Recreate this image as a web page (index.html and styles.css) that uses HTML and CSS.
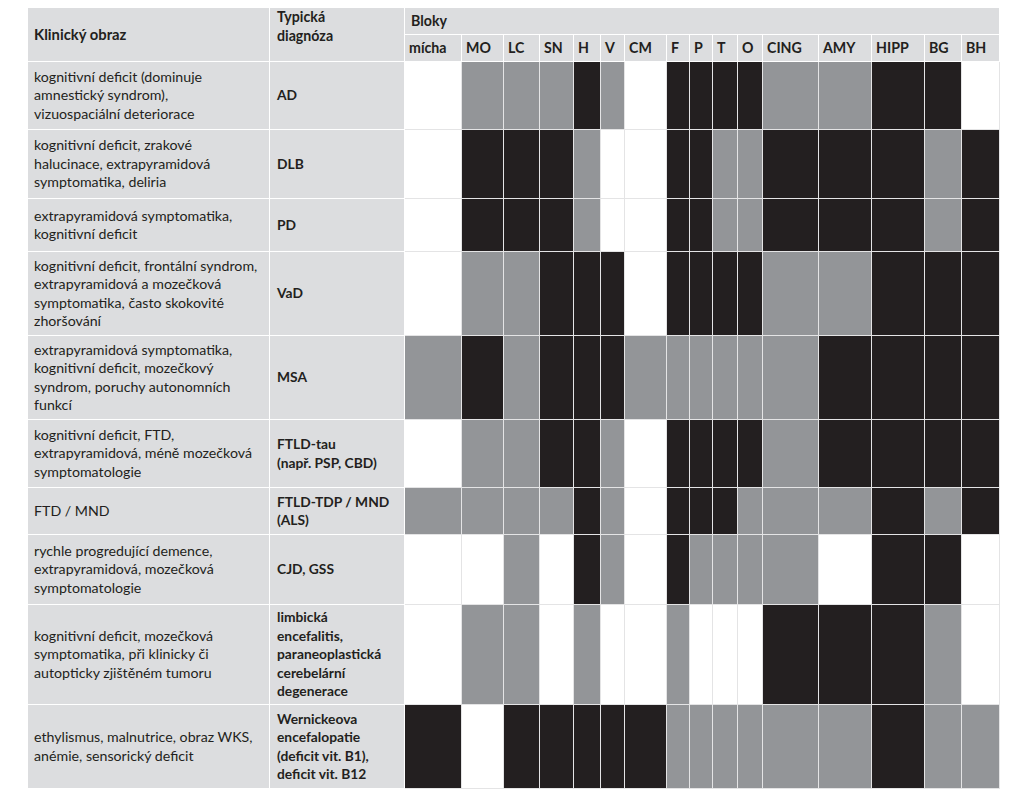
FILE: index.html
```html
<!DOCTYPE html>
<html lang="cs">
<head>
  <meta charset="UTF-8">
  <title>Bloky – klinický obraz a typická diagnóza</title>
  <link rel="stylesheet" href="styles.css">
</head>
<body>

  <div class="page">
    <table class="blocks">
      <colgroup>
        <col class="c-klin">
        <col class="c-diag">
        <col class="c57"><col class="c42"><col class="c36"><col class="c34">
        <col class="c27"><col class="c24"><col class="c42"><col class="c23">
        <col class="c23"><col class="c25"><col class="c25"><col class="c56">
        <col class="c53"><col class="c53"><col class="c37"><col class="c38">
      </colgroup>
      <thead>
        <tr class="hrow">
          <th rowspan="2" class="th-klin">Klinický obraz</th>
          <th rowspan="2" class="th-diag">Typická<br>diagnóza</th>
          <th colspan="16" class="th-bloky">Bloky</th>
        </tr>
        <tr class="hrow">
          <th>mícha</th><th>MO</th><th>LC</th><th>SN</th><th>H</th><th>V</th><th>CM</th><th>F</th>
          <th>P</th><th>T</th><th>O</th><th>CING</th><th>AMY</th><th>HIPP</th><th>BG</th><th>BH</th>
        </tr>
      </thead>
      <tbody>
        <!-- w = bílá, g = šedá, b = černá -->
        <tr class="r68">
          <td class="klin">kognitivní deficit (dominuje<br>amnestický syndrom),<br>vizuospaciální deteriorace</td>
          <td class="diag">AD</td>
          <td class="w"></td><td class="g"></td><td class="g"></td><td class="g"></td><td class="b"></td><td class="g"></td><td class="w"></td><td class="b"></td>
          <td class="b"></td><td class="b"></td><td class="b"></td><td class="g"></td><td class="g"></td><td class="b"></td><td class="b"></td><td class="w"></td>
        </tr>
        <tr class="r69">
          <td class="klin">kognitivní deficit, zrakové<br>halucinace, extrapyramidová<br>symptomatika, deliria</td>
          <td class="diag">DLB</td>
          <td class="w"></td><td class="b"></td><td class="b"></td><td class="b"></td><td class="g"></td><td class="w"></td><td class="w"></td><td class="b"></td>
          <td class="b"></td><td class="g"></td><td class="g"></td><td class="b"></td><td class="b"></td><td class="b"></td><td class="g"></td><td class="b"></td>
        </tr>
        <tr class="r53">
          <td class="klin">extrapyramidová symptomatika,<br>kognitivní deficit</td>
          <td class="diag">PD</td>
          <td class="w"></td><td class="b"></td><td class="b"></td><td class="b"></td><td class="g"></td><td class="w"></td><td class="w"></td><td class="b"></td>
          <td class="b"></td><td class="g"></td><td class="g"></td><td class="b"></td><td class="b"></td><td class="b"></td><td class="g"></td><td class="b"></td>
        </tr>
        <tr class="r84">
          <td class="klin">kognitivní deficit, frontální syndrom,<br>extrapyramidová a mozečková<br>symptomatika, často skokovité<br>zhoršování</td>
          <td class="diag">VaD</td>
          <td class="w"></td><td class="g"></td><td class="g"></td><td class="b"></td><td class="b"></td><td class="b"></td><td class="w"></td><td class="b"></td>
          <td class="b"></td><td class="b"></td><td class="b"></td><td class="g"></td><td class="g"></td><td class="b"></td><td class="b"></td><td class="b"></td>
        </tr>
        <tr class="r84">
          <td class="klin">extrapyramidová symptomatika,<br>kognitivní deficit, mozečkový<br>syndrom, poruchy autonomních<br>funkcí</td>
          <td class="diag">MSA</td>
          <td class="g"></td><td class="b"></td><td class="g"></td><td class="b"></td><td class="b"></td><td class="b"></td><td class="g"></td><td class="g"></td>
          <td class="g"></td><td class="g"></td><td class="g"></td><td class="g"></td><td class="b"></td><td class="b"></td><td class="b"></td><td class="b"></td>
        </tr>
        <tr class="r68">
          <td class="klin">kognitivní deficit, FTD,<br>extrapyramidová, méně mozečková<br>symptomatologie</td>
          <td class="diag">FTLD-tau<br>(např. PSP, CBD)</td>
          <td class="w"></td><td class="g"></td><td class="g"></td><td class="b"></td><td class="b"></td><td class="g"></td><td class="w"></td><td class="b"></td>
          <td class="b"></td><td class="b"></td><td class="b"></td><td class="g"></td><td class="b"></td><td class="b"></td><td class="b"></td><td class="b"></td>
        </tr>
        <tr class="r47">
          <td class="klin">FTD / MND</td>
          <td class="diag">FTLD-TDP / MND<br>(ALS)</td>
          <td class="g"></td><td class="g"></td><td class="g"></td><td class="g"></td><td class="b"></td><td class="g"></td><td class="w"></td><td class="b"></td>
          <td class="b"></td><td class="b"></td><td class="g"></td><td class="g"></td><td class="g"></td><td class="b"></td><td class="g"></td><td class="b"></td>
        </tr>
        <tr class="r70">
          <td class="klin">rychle progredující demence,<br>extrapyramidová, mozečková<br>symptomatologie</td>
          <td class="diag">CJD, GSS</td>
          <td class="w"></td><td class="w"></td><td class="g"></td><td class="w"></td><td class="b"></td><td class="g"></td><td class="w"></td><td class="b"></td>
          <td class="g"></td><td class="g"></td><td class="g"></td><td class="g"></td><td class="w"></td><td class="b"></td><td class="b"></td><td class="w"></td>
        </tr>
        <tr class="r100">
          <td class="klin">kognitivní deficit, mozečková<br>symptomatika, při klinicky či<br>autopticky zjištěném tumoru</td>
          <td class="diag">limbická<br>encefalitis,<br>paraneoplastická<br>cerebelární<br>degenerace</td>
          <td class="w"></td><td class="g"></td><td class="g"></td><td class="w"></td><td class="g"></td><td class="w"></td><td class="w"></td><td class="g"></td>
          <td class="w"></td><td class="w"></td><td class="w"></td><td class="b"></td><td class="b"></td><td class="b"></td><td class="g"></td><td class="w"></td>
        </tr>
        <tr class="r84">
          <td class="klin">ethylismus, malnutrice, obraz WKS,<br>anémie, sensorický deficit</td>
          <td class="diag">Wernickeova<br>encefalopatie<br>(deficit vit. B1),<br>deficit vit. B12</td>
          <td class="b"></td><td class="w"></td><td class="b"></td><td class="b"></td><td class="b"></td><td class="b"></td><td class="b"></td><td class="g"></td>
          <td class="g"></td><td class="g"></td><td class="g"></td><td class="g"></td><td class="g"></td><td class="b"></td><td class="g"></td><td class="g"></td>
        </tr>
      </tbody>
    </table>
  </div>

</body>
</html>
```

FILE: styles.css
```css
body {
  margin: 0;
  padding: 0;
  background-color: #ffffff;
  font-family: Lato, "Liberation Sans", sans-serif;
  color: #231f20;
}

.page {
  padding: 7px 0 0 27px;
}

.blocks {
  width: 973px;
  table-layout: fixed;
  border-collapse: collapse;
  font-size: 14.2px;
  line-height: 18.5px;
}

.c-klin { width: 242px; }
.c-diag { width: 135px; }
.c57 { width: 57px; }
.c56 { width: 56px; }
.c53 { width: 53px; }
.c42 { width: 42px; }
.c38 { width: 38px; }
.c37 { width: 37px; }
.c36 { width: 36px; }
.c34 { width: 34px; }
.c27 { width: 27px; }
.c25 { width: 25px; }
.c24 { width: 24px; }
.c23 { width: 23px; }

th, td {
  border: 1px solid #e4e4e5;
  padding: 0;
}

th {
  background-color: #dcdddf;
  font-weight: bold;
  text-align: left;
  padding: 0 4px;
  white-space: nowrap;
}

thead th {
  border-color: #ffffff;
}

.hrow {
  height: 27px;
}

.th-klin {
  padding-left: 6px;
  font-size: 14.8px;
}

.th-diag {
  padding: 0 7px;
  vertical-align: top;
}

.th-bloky {
  padding-left: 6px;
}

.klin, .diag {
  background-color: #dcdddf;
  border-color: #ffffff;
  padding: 0 6px;
  vertical-align: middle;
}

.diag {
  font-weight: bold;
  font-size: 13.8px;
  padding-left: 7px;
}

.w { background-color: #ffffff; }
.g { background-color: #939598; }
.b { background-color: #231f20; }

.r47 { height: 47px; }
.r53 { height: 53px; }
.r68 { height: 68px; }
.r69 { height: 69px; }
.r70 { height: 70px; }
.r84 { height: 84px; }
.r100 { height: 100px; }
```
